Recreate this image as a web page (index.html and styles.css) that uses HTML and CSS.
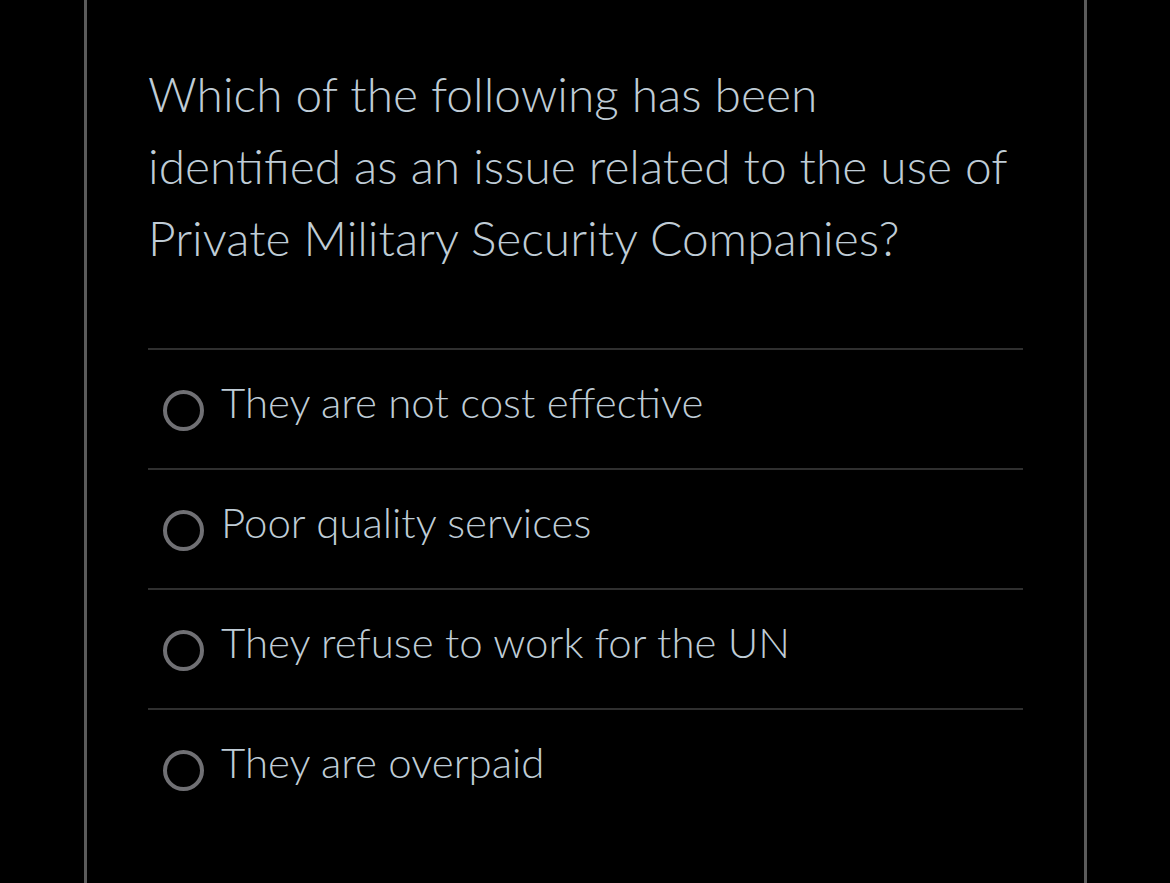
FILE: index.html
```html
<!DOCTYPE html>
<html>
<head>
<meta charset="utf-8">
<link rel="stylesheet" href="styles.css">
</head>
<body>
<main class="card">
  <h1 class="question">Which of the following has been identified as an issue related to the use of Private Military Security Companies?</h1>
  <ul class="options">
    <li class="option"><span class="radio"></span><span class="label">They are not cost effective</span></li>
    <li class="option"><span class="radio"></span><span class="label">Poor quality services</span></li>
    <li class="option"><span class="radio"></span><span class="label">They refuse to work for the UN</span></li>
    <li class="option"><span class="radio"></span><span class="label">They are overpaid</span></li>
  </ul>
</main>
</body>
</html>
```
FILE: styles.css
```css
html, body {
  margin: 0;
  padding: 0;
  background: #000;
  height: 100%;
  overflow: hidden;
}
body {
  font-family: "Lato Light", "Lato", "Open Sans", sans-serif;
  font-weight: 300;
  color: #bfccd6;
}
.card {
  box-sizing: border-box;
  margin-left: 84px;
  width: 1003px;
  height: 883px;
  border-left: 3px solid #5b5b5b;
  border-right: 3px solid #5b5b5b;
  padding: 58px 61px 0 61px;
}
.question {
  margin: 0;
  font-size: 47.9px;
  font-weight: 300;
  line-height: 72px;
}
.options {
  list-style: none;
  margin: 74px 0 0 0;
  padding: 0;
}
.option {
  display: flex;
  align-items: flex-start;
  height: 118px;
  border-top: 2px solid #2f2f2f;
}
.radio {
  box-sizing: border-box;
  flex: none;
  width: 41px;
  height: 41px;
  margin: 40px 0 0 15px;
  border: 4px solid #707074;
  border-radius: 50%;
}
.label {
  margin: 26px 0 0 17px;
  font-size: 42px;
  line-height: 52px;
}
```
